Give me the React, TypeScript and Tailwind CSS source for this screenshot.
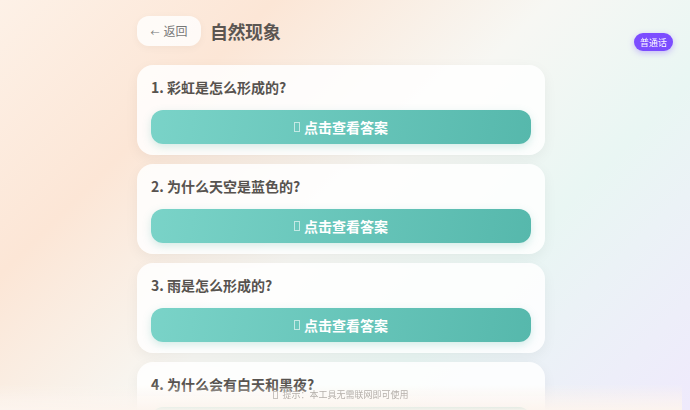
import React from 'react';

const questions = [
  '彩虹是怎么形成的?',
  '为什么天空是蓝色的?',
  '雨是怎么形成的?',
  '为什么会有白天和黑夜?',
  '为什么会打雷闪电?',
  '雪花是怎么形成的?',
  '为什么月亮会变形状?',
  '风是怎么形成的?',
  '为什么树叶会变黄?',
  '为什么海水是咸的?',
];

const font = "font-['Noto_Sans_CJK_SC','Noto_Sans',sans-serif]";

// emoji that the reference renders as a missing-glyph box
function Tofu({ className }: { className: string }) {
  return <span className={`inline-block border ${className}`} />;
}

export default function App() {
  return (
    <div
      className={`min-h-screen pr-[8px] bg-[linear-gradient(135deg,#fdf1e7_0%,#fce6d6_25%,#f7f7f3_50%,#e9f6f3_70%,#efeafc_100%)] bg-fixed ${font}`}
    >
      <div className="w-[408px] mx-auto pt-4 pb-16">
        {/* Header */}
        <div className="flex items-center gap-[9px] mb-[19px]">
          <button className="h-[30px] w-[64px] rounded-xl bg-white/80 shadow-[0_2px_8px_rgba(0,0,0,0.04)] text-[12px] text-[#777] flex items-center justify-center gap-1">
            <span className="text-[9px] mt-[3px]">←</span>
            <span>返回</span>
          </button>
          <h1 className="text-lg font-bold text-[#5b5652] tracking-tight">自然现象</h1>
        </div>

        {/* Question cards */}
        <div className="flex flex-col gap-[9px]">
          {questions.map((q, i) => (
            <div
              key={i}
              className="h-[90px] rounded-2xl bg-white/85 shadow-[0_4px_14px_rgba(0,0,0,0.05)] px-[14px] pt-[12px]"
            >
              <p className="text-sm font-bold text-[#57534f] leading-5">
                {i + 1}. {q}
              </p>
              <button className="mt-[13px] w-full h-[34px] rounded-xl bg-[linear-gradient(100deg,#7ad3c8,#56b8ac)] shadow-[0_3px_8px_rgba(86,184,172,0.25)] text-white text-sm font-bold flex items-center justify-center gap-[4px]">
                <Tofu className="w-[6px] h-[10px] border-white/60" />
                <span>点击查看答案</span>
              </button>
            </div>
          ))}
        </div>
      </div>

      {/* Language toggle */}
      <button className="fixed top-[33px] right-[17px] h-[18px] px-[6px] rounded-full bg-[#7c4dff] shadow-[0_2px_6px_rgba(124,77,255,0.35)] text-white text-[9px] leading-none">
        普通话
      </button>

      {/* Footer hint */}
      <div className="fixed bottom-0 left-0 right-[8px] h-[26px] bg-[linear-gradient(to_bottom,rgba(252,244,238,0)_0%,rgba(252,244,238,0.5)_45%,rgba(252,244,238,0.95)_100%)] flex items-start justify-center pt-[4px]">
        <span className="text-[9px] text-[#b5b0ab] flex items-center gap-[4px]">
          <Tofu className="w-[5px] h-[8px] border-[#c8c3be]" />
          提示：本工具无需联网即可使用
        </span>
      </div>
    </div>
  );
}
